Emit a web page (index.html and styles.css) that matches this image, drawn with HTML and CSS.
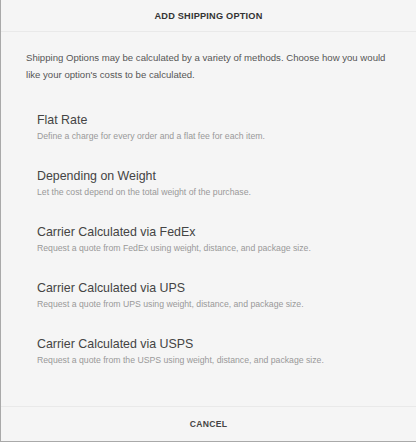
FILE: index.html
```html
<!DOCTYPE html>
<html lang="en">
<head>
    <meta charset="UTF-8">
    <title>Add Shipping Option</title>
    <link rel="stylesheet" href="styles.css">
</head>
<body>
    <div class="dialog">
        <div class="dialog-header">ADD SHIPPING OPTION</div>
        <div class="dialog-body">
            <p class="intro">Shipping Options may be calculated by a variety of methods. Choose how you would like your option's costs to be calculated.</p>
            <ul class="options">
                <li class="option">
                    <div class="option-title">Flat Rate</div>
                    <div class="option-desc">Define a charge for every order and a flat fee for each item.</div>
                </li>
                <li class="option">
                    <div class="option-title">Depending on Weight</div>
                    <div class="option-desc">Let the cost depend on the total weight of the purchase.</div>
                </li>
                <li class="option">
                    <div class="option-title">Carrier Calculated via FedEx</div>
                    <div class="option-desc">Request a quote from FedEx using weight, distance, and package size.</div>
                </li>
                <li class="option">
                    <div class="option-title">Carrier Calculated via UPS</div>
                    <div class="option-desc">Request a quote from UPS using weight, distance, and package size.</div>
                </li>
                <li class="option">
                    <div class="option-title">Carrier Calculated via USPS</div>
                    <div class="option-desc">Request a quote from the USPS using weight, distance, and package size.</div>
                </li>
            </ul>
        </div>
        <div class="dialog-footer">CANCEL</div>
    </div>
</body>
</html>
```

FILE: styles.css
```css
html, body {
    margin: 0;
    padding: 0;
    background-color: #f6f6f6;
}
body {
    font-family: 'Liberation Sans', Arial, sans-serif;
    color: #333;
}
.dialog {
    width: 416px;
    height: 442px;
    box-sizing: border-box;
    border-left: 1px solid #a9a9a9;
    border-bottom: 1px solid #a9a9a9;
    background-color: #f5f5f5;
    display: flex;
    flex-direction: column;
}
.dialog-header {
    height: 31px;
    border-bottom: 1px solid #e9e9e9;
    display: flex;
    align-items: center;
    justify-content: center;
    font-size: 9.2px;
    font-weight: bold;
    letter-spacing: 0.2px;
    color: #333;
}
.dialog-body {
    flex: 1;
    padding: 17px 0 0 25px;
}
.intro {
    margin: 0;
    font-size: 9.6px;
    line-height: 17px;
    color: #555;
    width: 364px;
}
.options {
    list-style: none;
    margin: 28px 0 0;
    padding: 0 0 0 11px;
}
.option {
    height: 56px;
}
.option-title {
    font-size: 12.4px;
    line-height: 18px;
    color: #444;
}
.option-desc {
    font-size: 8.7px;
    line-height: 14px;
    color: #999;
}
.dialog-footer {
    height: 34px;
    border-top: 1px solid #e9e9e9;
    display: flex;
    align-items: center;
    justify-content: center;
    font-size: 8.6px;
    font-weight: bold;
    letter-spacing: 0.3px;
    color: #444;
}
```
